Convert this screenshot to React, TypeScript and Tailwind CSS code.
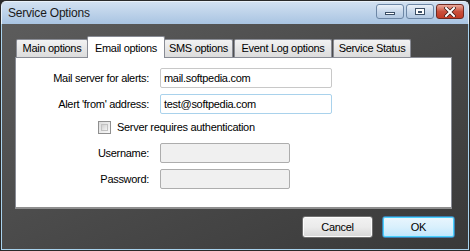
import React from "react";

function Tab({ label, active, w }: { label: string; active?: boolean; w: string }) {
  if (active) {
    return (
      <div
        className={`${w} h-[22px] -mb-px -mx-[1px] relative z-10 flex items-start justify-center pt-[3px] bg-white border border-b-0 border-[#898c95] rounded-t-[2px]`}
      >
        {label}
      </div>
    );
  }
  return (
    <div
      className={`${w} h-[18px] mt-[4px] flex items-center justify-center bg-gradient-to-b from-[#f2f2f2] to-[#dcdcdc] border border-b-0 border-[#898c95] rounded-t-[2px]`}
    >
      {label}
    </div>
  );
}

function Field({ value, focused, disabled, w }: { value?: string; focused?: boolean; disabled?: boolean; w: string }) {
  return (
    <div
      className={`${w} h-[20px] flex items-center px-[3px] rounded-[2px] border ${
        focused ? "border-[#a9d2ec] bg-white" : disabled ? "border-[#adadad] bg-[#f0f0f0]" : "border-[#c8c8c8] bg-white"
      }`}
    >
      {value}
    </div>
  );
}

function Row({ label, children }: { label: string; children: React.ReactNode }) {
  return (
    <div className="flex items-center">
      <div className="w-[133px] text-right">{label}</div>
      <div className="ml-[11px]">{children}</div>
    </div>
  );
}

export default function App() {
  return (
    <div
      className="w-[470px] h-[251px] flex flex-col bg-[#2a2a2a] text-black text-[11px] tracking-[-0.3px] overflow-hidden"
      style={{ fontFamily: '"Liberation Sans", Arial, sans-serif' }}
    >
      {/* Title bar */}
      <div className="h-[23px] mx-px mt-px flex items-center justify-between pl-[6px] pr-[4px] rounded-t-[5px] bg-gradient-to-b from-[#d2e1f1] to-[#a9c4e2] border-t border-x border-[#e9f1f9]">
        <span className="text-[12px] tracking-[-0.2px] text-[#1a1a1a]">Service Options</span>
        <div className="flex items-center gap-[2px] -mt-[3px]">
          <div className="w-[28px] h-[15px] rounded-[3px] border border-[#6d87a6] bg-gradient-to-b from-[#eaf1f9] via-[#c8d8eb] to-[#b2c8e1] flex items-end justify-center pb-[3px]">
            <div className="w-[10px] h-[3px] bg-white border border-[#3c4f66]" />
          </div>
          <div className="w-[28px] h-[15px] rounded-[3px] border border-[#6d87a6] bg-gradient-to-b from-[#eaf1f9] via-[#c8d8eb] to-[#b2c8e1] flex items-center justify-center">
            <div className="w-[10px] h-[7px] bg-white border border-[#3c4f66] flex items-center justify-center">
              <div className="w-[4px] h-[2px] bg-[#3c4f66]" />
            </div>
          </div>
          <div className="w-[28px] h-[15px] rounded-[3px] border border-[#6e2a22] bg-gradient-to-b from-[#e9a99c] via-[#c9503c] to-[#c23a24] flex items-center justify-center">
            <svg width="12" height="10" viewBox="0 0 12 10">
              <path d="M2 1 L10 9 M10 1 L2 9" stroke="#3a1a15" strokeWidth="3.4" strokeLinecap="square" />
              <path d="M2 1 L10 9 M10 1 L2 9" stroke="#ffffff" strokeWidth="2" strokeLinecap="square" />
            </svg>
          </div>
        </div>
      </div>

      {/* Body */}
      <div className="flex-1 mx-px mb-px border-x border-b border-[#a9d3ee] bg-gradient-to-br from-[#5c5c5c] to-[#393939] flex flex-col pl-[13px] pr-[13px] pt-[12px]">
        {/* Tabs */}
        <div className="flex items-end pl-[1px] h-[21px]">
          <Tab label="Main options" w="w-[72px]" />
          <Tab label="Email options" w="w-[78px]" active />
          <Tab label="SMS options" w="w-[69px]" />
          <div className="w-[1px]" />
          <Tab label="Event Log options" w="w-[98px]" />
          <div className="w-[1px]" />
          <Tab label="Service Status" w="w-[78px]" />
        </div>

        {/* Panel */}
        <div className="w-[437px] h-[152px] bg-white border border-[#898c95] border-b-2 border-b-[#8e8e8e] flex flex-col pt-[10px]">
          <div className="flex flex-col gap-[6px]">
            <Row label="Mail server for alerts:">
              <Field w="w-[172px]" value="mail.softpedia.com" />
            </Row>
            <Row label="Alert 'from' address:">
              <Field w="w-[172px]" value="test@softpedia.com" focused />
            </Row>
          </div>
          <div className="flex items-center mt-[7px] pl-[82px] h-[13px]">
            <div className="w-[13px] h-[13px] border border-[#8f8f8f] bg-gradient-to-br from-[#dcdcdc] to-[#f8f8f8] p-[2px]">
              <div className="w-full h-full border border-[#c2c2c2] bg-gradient-to-br from-[#d0d0d0] to-[#f4f4f4]" />
            </div>
            <span className="ml-[6px]">Server requires authentication</span>
          </div>
          <div className="flex flex-col gap-[6px] mt-[9px]">
            <Row label="Username:">
              <Field w="w-[130px]" disabled />
            </Row>
            <Row label="Password:">
              <Field w="w-[130px]" disabled />
            </Row>
          </div>
        </div>

        {/* Buttons */}
        <div className="flex justify-end gap-[9px] mt-[7px]">
          <button className="w-[71px] h-[22px] rounded-[3px] border border-[#707070] bg-gradient-to-b from-[#f2f2f2] via-[#ebebeb] to-[#d6d6d6] shadow-[inset_0_0_0_1px_#fcfcfc]">
            Cancel
          </button>
          <button className="w-[73px] h-[22px] rounded-[3px] border border-[#3c7fb1] bg-gradient-to-b from-[#eaf6fd] via-[#d9f0fc] to-[#bee6fd] shadow-[inset_0_0_0_1px_#48d1fe]">
            OK
          </button>
        </div>
      </div>
    </div>
  );
}
